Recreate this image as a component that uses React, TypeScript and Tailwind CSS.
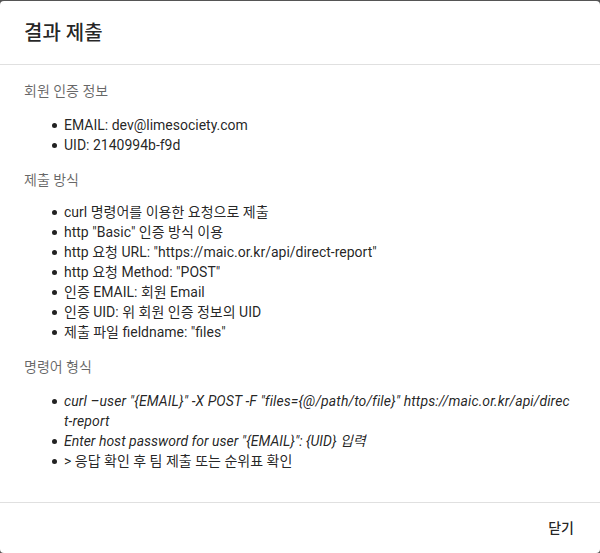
import React from "react";

const sections = [
  {
    title: "회원 인증 정보",
    items: ["EMAIL: dev@limesociety.com", "UID: 2140994b-f9d"],
    mt: "mt-[14px]",
    mb: "mb-[15px]",
  },
  {
    title: "제출 방식",
    items: [
      "curl 명령어를 이용한 요청으로 제출",
      'http "Basic" 인증 방식 이용',
      'http 요청 URL: "https://maic.or.kr/api/direct-report"',
      'http 요청 Method: "POST"',
      "인증 EMAIL: 회원 Email",
      "인증 UID: 위 회원 인증 정보의 UID",
      '제출 파일 fieldname: "files"',
    ],
    mt: "mt-[12px]",
    mb: "mb-[15px]",
  },
];

function Item({ children, className = "" }: any) {
  return (
    <li className={"flex " + className}>
      <span className="w-[5px] h-[5px] rounded-full bg-[#222] mt-[8px] mr-[7px] shrink-0" />
      <span className="min-w-0">{children}</span>
    </li>
  );
}

export default function App() {
  return (
    <div
      className="w-[600px] h-[553px] bg-[#555555] pt-px overflow-hidden"
      style={{ fontFamily: 'Roboto, "Noto Sans CJK KR", sans-serif' }}
    >
      <div className="h-[552px] bg-white rounded-[4px] flex flex-col text-[rgba(0,0,0,0.87)]">
        <div className="h-16 px-6 flex items-center border-b border-[#e0e0e0]">
          <h2 className="text-xl font-medium">결과 제출</h2>
        </div>

        <div className="flex-1 px-6 pt-4 text-sm leading-5">
          {sections.map((s) => (
            <div key={s.title} className={s.mb}>
              <p className="text-[rgba(0,0,0,0.6)]">{s.title}</p>
              <ul className={"pl-[28px] " + s.mt}>
                {s.items.map((it) => (
                  <Item key={it}>{it}</Item>
                ))}
              </ul>
            </div>
          ))}
          <div>
            <p className="text-[rgba(0,0,0,0.6)]">명령어 형식</p>
            <ul className="pl-[28px] mt-[14px] break-all">
              <Item>
                <i className="tracking-[0.1px]">
                  curl –user "{"{EMAIL}"}" -X POST -F "files={"{@/path/to/file}"}"
                  https://maic.or.kr/api/direc<wbr />t&#8209;report
                </i>
              </Item>
              <Item>
                <i>Enter host password for user "{"{EMAIL}"}": {"{UID}"} 입력</i>
              </Item>
              <Item>&gt; 응답 확인 후 팀 제출 또는 순위표 확인</Item>
            </ul>
          </div>
        </div>

        <div className="h-[51px] border-t border-[#e0e0e0] flex items-center justify-end pr-[10px]">
          <button className="px-4 h-9 text-sm font-medium">닫기</button>
        </div>
      </div>
    </div>
  );
}
